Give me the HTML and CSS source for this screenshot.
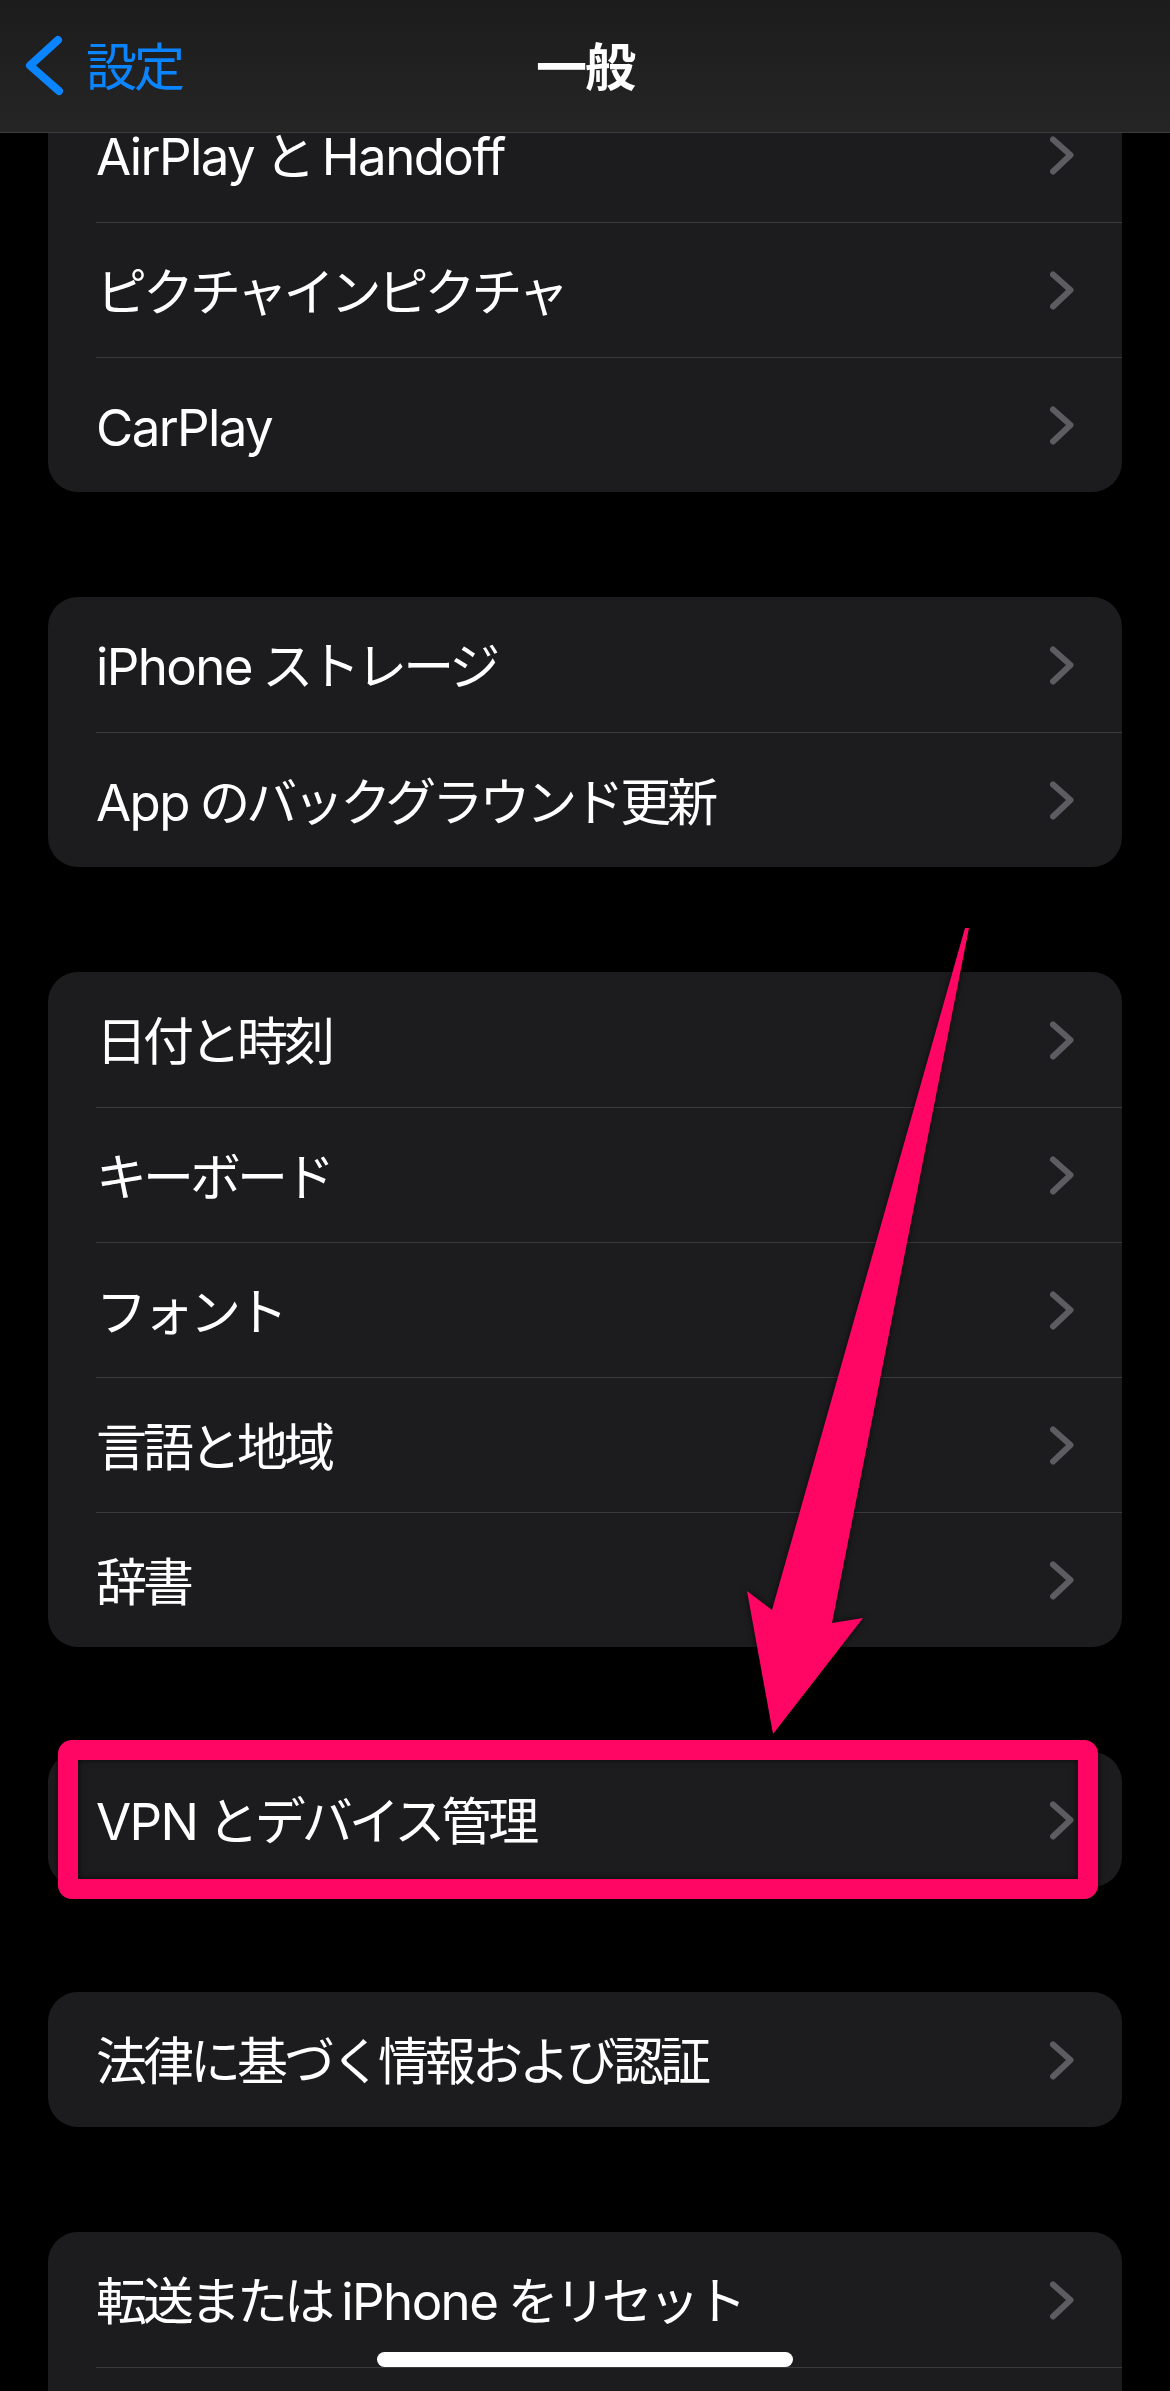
FILE: index.html
```html
<!DOCTYPE html>
<html lang="ja">
<head>
<meta charset="utf-8">
<title>一般</title>
<link rel="stylesheet" href="styles.css">
</head>
<body>
<header class="nav">
  <div class="nav-back">
    <svg class="back-chevron" viewBox="0 0 40 64" width="40" height="64"><path d="M34 6 L6 31.5 L35 57" /></svg>
    <span class="back-label">設定</span>
  </div>
  <div class="nav-title">一般</div>
  <div class="nav-spacer"></div>
</header>

<main class="content">
  <section class="group">
    <div class="row"><div class="row-body"><span class="label"><span class="en">AirPlay</span> と <span class="en">Handoff</span></span><svg class="chev" viewBox="0 0 24 44"><path d="M3 6.5 L20.5 22 L3 38.5"/></svg></div></div>
    <div class="row"><div class="row-body"><span class="label">ピクチャインピクチャ</span><svg class="chev" viewBox="0 0 24 44"><path d="M3 6.5 L20.5 22 L3 38.5"/></svg></div></div>
    <div class="row"><div class="row-body"><span class="label"><span class="en">CarPlay</span></span><svg class="chev" viewBox="0 0 24 44"><path d="M3 6.5 L20.5 22 L3 38.5"/></svg></div></div>
  </section>

  <section class="group">
    <div class="row"><div class="row-body"><span class="label"><span class="en">iPhone</span> ストレージ</span><svg class="chev" viewBox="0 0 24 44"><path d="M3 6.5 L20.5 22 L3 38.5"/></svg></div></div>
    <div class="row"><div class="row-body"><span class="label"><span class="en">App</span> のバックグラウンド更新</span><svg class="chev" viewBox="0 0 24 44"><path d="M3 6.5 L20.5 22 L3 38.5"/></svg></div></div>
  </section>

  <section class="group">
    <div class="row"><div class="row-body"><span class="label">日付と時刻</span><svg class="chev" viewBox="0 0 24 44"><path d="M3 6.5 L20.5 22 L3 38.5"/></svg></div></div>
    <div class="row"><div class="row-body"><span class="label">キーボード</span><svg class="chev" viewBox="0 0 24 44"><path d="M3 6.5 L20.5 22 L3 38.5"/></svg></div></div>
    <div class="row"><div class="row-body"><span class="label">フォント</span><svg class="chev" viewBox="0 0 24 44"><path d="M3 6.5 L20.5 22 L3 38.5"/></svg></div></div>
    <div class="row"><div class="row-body"><span class="label">言語と地域</span><svg class="chev" viewBox="0 0 24 44"><path d="M3 6.5 L20.5 22 L3 38.5"/></svg></div></div>
    <div class="row"><div class="row-body"><span class="label">辞書</span><svg class="chev" viewBox="0 0 24 44"><path d="M3 6.5 L20.5 22 L3 38.5"/></svg></div></div>
  </section>

  <section class="group">
    <div class="row"><div class="row-body"><span class="label"><span class="en">VPN</span> とデバイス管理</span><svg class="chev" viewBox="0 0 24 44"><path d="M3 6.5 L20.5 22 L3 38.5"/></svg></div></div>
  </section>

  <section class="group">
    <div class="row"><div class="row-body"><span class="label">法律に基づく情報および認証</span><svg class="chev" viewBox="0 0 24 44"><path d="M3 6.5 L20.5 22 L3 38.5"/></svg></div></div>
  </section>

  <section class="group">
    <div class="row"><div class="row-body"><span class="label">転送または <span class="en">iPhone</span> をリセット</span><svg class="chev" viewBox="0 0 24 44"><path d="M3 6.5 L20.5 22 L3 38.5"/></svg></div></div>
    <div class="row"><div class="row-body"></div></div>
  </section>
</main>

<svg class="annotation" viewBox="0 0 1170 2391" width="1170" height="2391">
  <rect class="mark-box" x="68" y="1750" width="1020" height="139" rx="4" ry="4"/>
  <polygon class="mark-arrow" points="965,928 969,928 832,1623 863,1618 773,1734 747,1591 772,1610"/>
</svg>

<div class="home-indicator"></div>
</body>
</html>
```

FILE: styles.css
```css
html, body {
  margin: 0;
  padding: 0;
  background: #000;
}

body {
  width: 1170px;
  height: 2391px;
  overflow: hidden;
  position: relative;
  font-family: Inter, "Noto Sans CJK JP", sans-serif;
  color: #fff;
}

.nav {
  position: absolute;
  top: 0;
  left: 0;
  right: 0;
  height: 132px;
  z-index: 5;
  display: grid;
  grid-template-columns: 1fr auto 1fr;
  align-items: center;
  background: linear-gradient(#1c1c1c, #252525);
  border-bottom: 1px solid #3c3c3c;
}

.nav-back {
  display: flex;
  align-items: center;
  padding-left: 24px;
  color: #0a84ff;
}

.back-chevron {
  display: block;
  fill: none;
  stroke: #0a84ff;
  stroke-width: 8;
  stroke-linecap: round;
  stroke-linejoin: round;
}

.back-label {
  margin-left: 22px;
  font-size: 51px;
  line-height: 1;
  letter-spacing: -3px;
  font-family: "Noto Sans CJK JP", sans-serif;
  font-weight: 400;
  position: relative;
  top: -2px;
}

.nav-title {
  font-size: 51px;
  font-weight: 700;
  line-height: 1;
  letter-spacing: -2px;
  font-family: "Noto Sans CJK JP", sans-serif;
  position: relative;
  top: -2px;
}

.content {
  padding: 87px 48px 0;
  display: flex;
  flex-direction: column;
  gap: 105px;
}

.group {
  background: #1c1c1e;
  border-radius: 30px;
  overflow: hidden;
  flex-shrink: 0;
}

.row {
  padding-left: 48px;
  height: 135px;
}

.row-body {
  height: 135px;
  box-sizing: border-box;
  display: flex;
  align-items: center;
  justify-content: space-between;
  padding-right: 48px;
}

.row + .row .row-body {
  border-top: 1px solid #3a3a3d;
}

.label {
  font-size: 51px;
  line-height: 1;
  letter-spacing: -4px;
  white-space: nowrap;
  position: relative;
  top: 2px;
}

.en {
  letter-spacing: -1.6px;
}

.chev {
  width: 24px;
  height: 44px;
  flex-shrink: 0;
  fill: none;
  stroke: #5c5c61;
  stroke-width: 6;
  stroke-linecap: round;
  stroke-linejoin: round;
}

.annotation {
  position: absolute;
  top: 0;
  left: 0;
  z-index: 6;
  pointer-events: none;
  filter: drop-shadow(0 0 3px rgba(0, 0, 0, 0.7));
}

.mark-box {
  fill: none;
  stroke: #ff0564;
  stroke-width: 20;
}

.mark-arrow {
  fill: #ff0564;
}

.home-indicator {
  position: absolute;
  left: 377px;
  bottom: 24px;
  width: 416px;
  height: 15px;
  border-radius: 8px;
  background: #fff;
  z-index: 7;
}
```
